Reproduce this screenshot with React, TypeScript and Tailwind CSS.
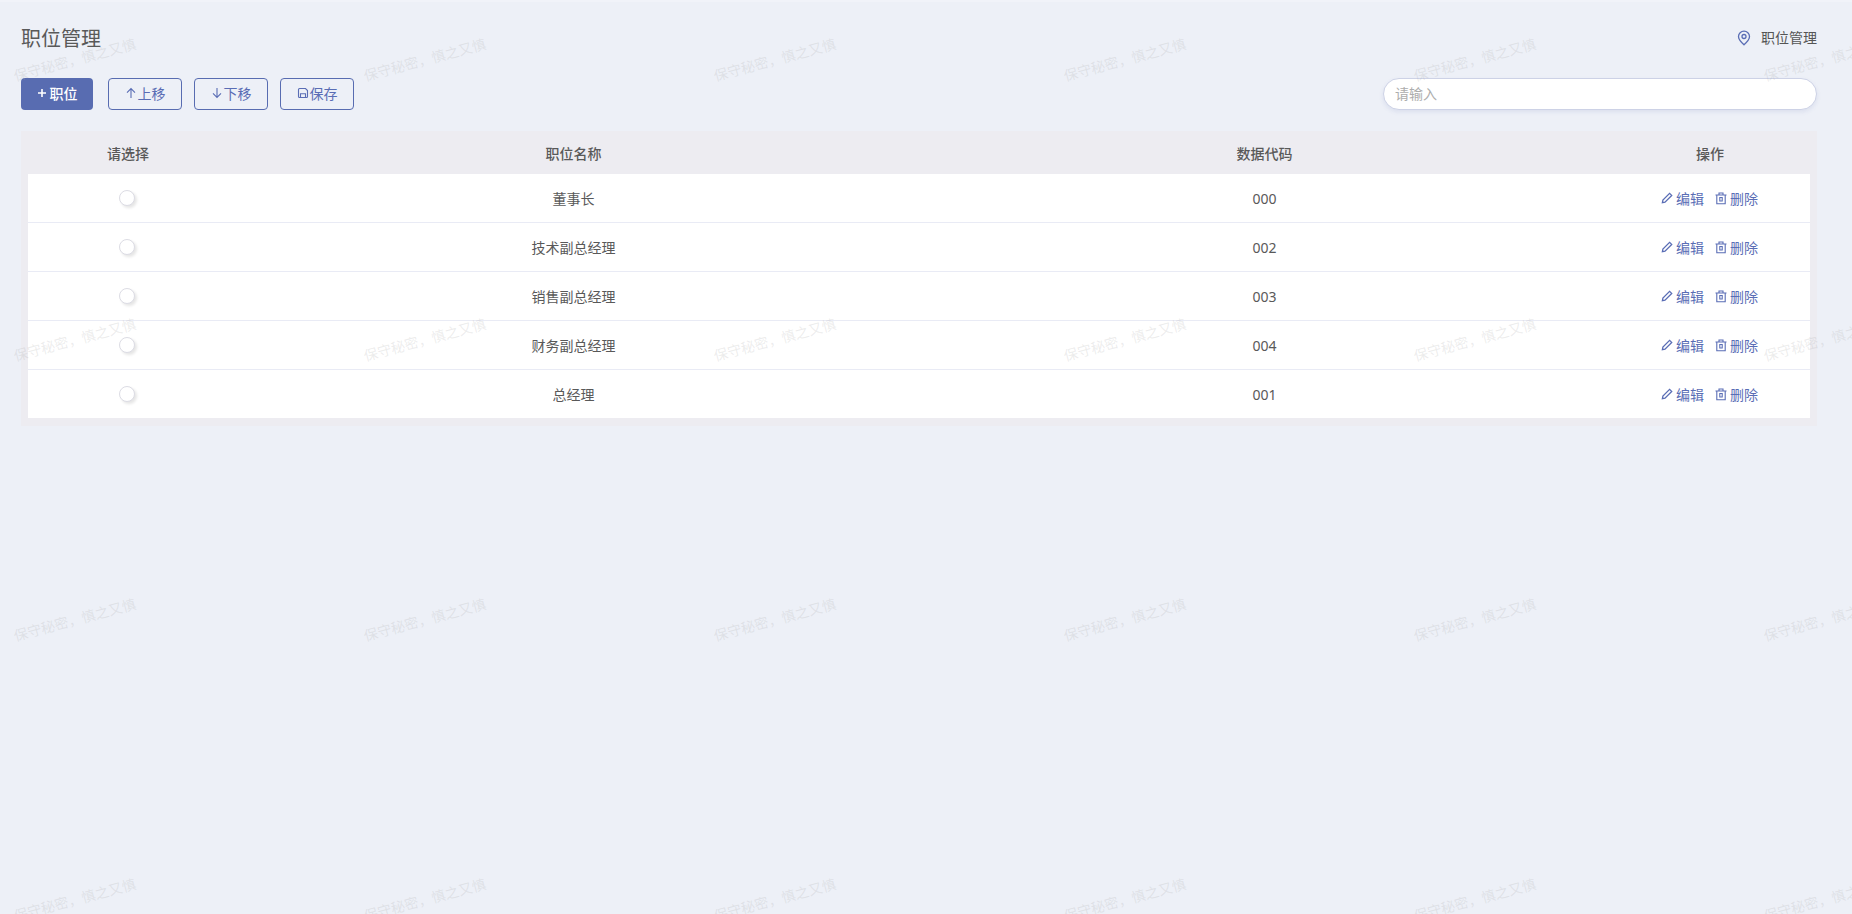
import React from "react";

const rows = [
  ["董事长", "000"],
  ["技术副总经理", "002"],
  ["销售副总经理", "003"],
  ["财务副总经理", "004"],
  ["总经理", "001"],
];

const wmX = [14, 364, 714, 1064, 1414, 1764];
const wmY = [37, 317, 597, 877];

function Pencil() {
  return (
    <svg width="12" height="12" viewBox="0 0 12 12" fill="none" stroke="currentColor" strokeWidth="1.3" className="shrink-0">
      <path d="M1.4 10.6 L1.9 8 L8.6 1.3 L10.7 3.4 L4 10.1 Z" />
    </svg>
  );
}

function Trash() {
  return (
    <svg width="12" height="13" viewBox="0 0 12 13" fill="none" stroke="currentColor" strokeWidth="1.1" className="shrink-0">
      <path d="M0.5 3 H11.5 M4 3 V1 H8 V3 M1.8 3 V11.8 H10.2 V3 M4.8 5.5 V9 H7.2 V5.5 Z" />
    </svg>
  );
}

function ArrowUp() {
  return (
    <svg width="12" height="12" viewBox="0 0 12 12" fill="none" stroke="currentColor" strokeWidth="1.1" className="shrink-0">
      <path d="M6 11 V1.8 M2 5.6 L6 1.6 L10 5.6" />
    </svg>
  );
}

function ArrowDown() {
  return (
    <svg width="12" height="12" viewBox="0 0 12 12" fill="none" stroke="currentColor" strokeWidth="1.1" className="shrink-0">
      <path d="M6 1 V10.2 M2 6.4 L6 10.4 L10 6.4" />
    </svg>
  );
}

function SaveIcon() {
  return (
    <svg width="12" height="12" viewBox="0 0 12 12" fill="none" stroke="currentColor" strokeWidth="1.1" className="shrink-0">
      <path d="M1.5 2.5 Q1.5 1.5 2.5 1.5 H8.5 L10.5 3.5 V9.5 Q10.5 10.5 9.5 10.5 H2.5 Q1.5 10.5 1.5 9.5 Z M3.5 10.5 V6.8 H8.5 V10.5" />
    </svg>
  );
}

function Pin() {
  return (
    <svg width="14" height="16" viewBox="0 0 14 16" fill="none" stroke="#5a6db5" strokeWidth="1.3" className="shrink-0">
      <path d="M7 14.8 C4.6 12.7 1.5 10 1.5 6.6 C1.5 3.5 4 1.2 7 1.2 C10 1.2 12.5 3.5 12.5 6.6 C12.5 10 9.4 12.7 7 14.8 Z" />
      <circle cx="7" cy="6.5" r="2" />
    </svg>
  );
}

function OutlineButton({ icon, label }: { icon: React.ReactNode; label: string }) {
  return (
    <button className="flex h-8 w-[74px] items-center justify-center gap-[1px] rounded-[4px] border border-[#586cb1] pb-[2px] text-[14px] text-[#5a6db5]">
      {icon}
      <span>{label}</span>
    </button>
  );
}

export default function App() {
  return (
    <div
      className="relative h-[914px] w-full overflow-hidden bg-[#edf0f7] text-[#595959]"
      style={{ fontFamily: '"Noto Sans", "Noto Sans CJK SC", sans-serif' }}
    >
      <div className="h-0.5 bg-[#f1f3f9]" />
      <div className="px-[21px] pr-[35px]">
        <div className="flex h-[72px] items-center justify-between">
          <h1 className="pt-[2px] text-[20px] leading-[28px] font-normal text-[#595959]">职位管理</h1>
          <div className="flex items-center gap-[10px] pb-[2px] text-[14px] text-[#555]">
            <span className="pt-[2px]">
              <Pin />
            </span>
            <span>职位管理</span>
          </div>
        </div>

        <div className="mt-[4px] flex h-8 items-center justify-between">
          <div className="flex items-center">
            <button className="flex h-8 w-[72px] items-center justify-center gap-[3px] rounded-[4px] bg-[#586cb1] pb-[2px] text-[14px] font-medium text-white">
              <svg width="10" height="10" viewBox="0 0 10 10" stroke="currentColor" strokeWidth="1.6" className="shrink-0">
                <path d="M5 1 V9 M1 5 H9" />
              </svg>
              <span>职位</span>
            </button>
            <div className="ml-[15px] flex gap-3">
              <OutlineButton icon={<ArrowUp />} label="上移" />
              <OutlineButton icon={<ArrowDown />} label="下移" />
              <OutlineButton icon={<SaveIcon />} label="保存" />
            </div>
          </div>
          <input
            placeholder="请输入"
            className="h-8 w-[434px] rounded-full border border-[#cdd2e6] bg-white pr-[11px] pb-[2px] pl-[11px] text-[14px] shadow-[0_2px_4px_rgba(90,108,177,0.12)] outline-none placeholder:text-[#adadad]"
          />
        </div>

        <div className="mt-[21px] bg-[#edecf1] px-[7px] pb-[8px]">
          <div className="grid h-[43px] grid-cols-[200px_1fr_1fr_200px] items-center pt-[2px] text-center text-[14px] font-medium text-[#595959]">
            <div>请选择</div>
            <div>职位名称</div>
            <div>数据代码</div>
            <div>操作</div>
          </div>
          <div className="bg-white">
            {rows.map(([name, code], i) => (
              <div
                key={code}
                className={`grid grid-cols-[200px_1fr_1fr_200px] items-center text-center text-[14px] ${
                  i < rows.length - 1 ? "h-[49px] border-b border-[#e9ebf5]" : "h-[48px]"
                }`}
              >
                <div className="flex justify-center pr-[2px]">
                  <span className="block h-4 w-4 rounded-full border border-[#dcdce4] bg-white shadow-[2px_2px_3px_rgba(0,0,0,0.1)]" />
                </div>
                <div>{name}</div>
                <div>{code}</div>
                <div className="flex items-center justify-center gap-[11px] pr-[1px] text-[#5a6db5]">
                  <span className="flex items-center gap-[3px]">
                    <Pencil />
                    编辑
                  </span>
                  <span className="flex items-center gap-[3px]">
                    <Trash />
                    删除
                  </span>
                </div>
              </div>
            ))}
          </div>
        </div>
      </div>

      {wmY.flatMap((y) =>
        wmX.map((x) => (
          <span
            key={`${x}-${y}`}
            className="pointer-events-none absolute -rotate-[15deg] whitespace-nowrap text-[14px] leading-[14px] text-[rgba(170,170,170,0.22)]"
            style={{ left: x - 2, top: y + 16 }}
          >
            保守秘密，慎之又慎
          </span>
        ))
      )}
    </div>
  );
}
